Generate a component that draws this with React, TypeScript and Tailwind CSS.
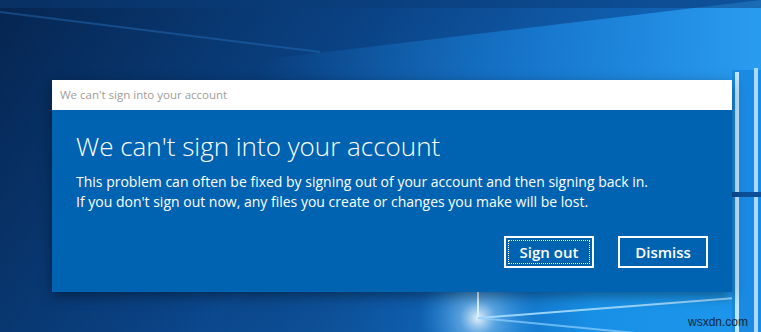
import React from 'react';

function Wallpaper() {
  return (
    <svg className="absolute inset-0" width="761" height="332" viewBox="0 0 761 332">
      <defs>
        <linearGradient id="base" x1="0" y1="0" x2="1" y2="0.3">
          <stop offset="0" stopColor="#062550" />
          <stop offset="0.45" stopColor="#0a4284" />
          <stop offset="1" stopColor="#1572cc" />
        </linearGradient>
        <linearGradient id="topband" x1="0" y1="0" x2="1" y2="0">
          <stop offset="0" stopColor="#1a7fd6" stopOpacity="0" />
          <stop offset="0.5" stopColor="#1a86e0" stopOpacity="0.6" />
          <stop offset="1" stopColor="#2a9cf0" stopOpacity="1" />
        </linearGradient>
        <linearGradient id="floor" x1="0" y1="0" x2="1" y2="0">
          <stop offset="0" stopColor="#05254d" stopOpacity="0" />
          <stop offset="0.4" stopColor="#0d5fb0" stopOpacity="0.5" />
          <stop offset="0.7" stopColor="#1890e6" stopOpacity="1" />
          <stop offset="1" stopColor="#1d97ec" stopOpacity="1" />
        </linearGradient>
        <radialGradient id="glow" cx="478" cy="318" r="60" gradientUnits="userSpaceOnUse">
          <stop offset="0" stopColor="#ffffff" stopOpacity="0.9" />
          <stop offset="0.3" stopColor="#9fd8ff" stopOpacity="0.5" />
          <stop offset="1" stopColor="#3aa8f5" stopOpacity="0" />
        </radialGradient>
      </defs>
      <rect width="761" height="332" fill="url(#base)" />
      <polygon points="260,60 761,0 761,90 260,90" fill="url(#topband)" />
      <polygon points="0,0 761,0 761,8 0,8" fill="#0a3c78" opacity="0.5" />
      <line x1="0" y1="12" x2="320" y2="52" stroke="#2a78c8" strokeWidth="2" opacity="0.4" />
      <polygon points="250,292 761,292 761,332 200,332" fill="url(#floor)" />
      <circle cx="478" cy="318" r="60" fill="url(#glow)" />
      <line x1="478" y1="292" x2="478" y2="318" stroke="#d8f0ff" strokeWidth="2" />
      <line x1="478" y1="318" x2="761" y2="296" stroke="#a8dcff" strokeWidth="2" opacity="0.9" />
      <line x1="478" y1="318" x2="761" y2="345" stroke="#8fd0ff" strokeWidth="2" opacity="0.7" />
      <rect x="732" y="70" width="29" height="262" fill="#1a8ae2" />
      <rect x="735" y="72" width="4" height="260" fill="#bfe6ff" />
      <rect x="754" y="68" width="4" height="264" fill="#a8dcff" />
      <rect x="732" y="192" width="29" height="5" fill="#0c4f98" />
    </svg>
  );
}

export default function App() {
  return (
    <div className="relative w-[761px] h-[332px] overflow-hidden" style={{ fontFamily: '"Open Sans", "Noto Sans", sans-serif' }}>
      <Wallpaper />
      <div className="relative ml-[52px] mt-[80px] w-[680px] shadow-[0_4px_12px_rgba(0,0,0,0.4)]">
        <div className="h-[30px] bg-white flex items-center pl-2 text-[11.5px] text-[#a09c98]">
          We can't sign into your account
        </div>
        <div className="h-[182px] bg-[#0063b1] px-6 pt-[19px] text-white">
          <h1 className="text-[26px] font-light leading-[35px]">We can't sign into your account</h1>
          <p className="mt-[8px] text-[14px] leading-[20px]">
            This problem can often be fixed by signing out of your account and then signing back in.
            <br />
            If you don't sign out now, any files you create or changes you make will be lost.
          </p>
          <div className="flex justify-end gap-6 mt-[24px]">
            <button className="w-[90px] h-[32px] border-2 border-white p-[2px] text-[15px] font-semibold">
              <span className="flex h-full w-full items-center justify-center border border-dotted border-white">Sign out</span>
            </button>
            <button className="w-[90px] h-[32px] border-2 border-white text-[15px] font-semibold">Dismiss</button>
          </div>
        </div>
      </div>
      <div className="absolute left-[688px] top-[313px] text-[12px] text-[#10283f]" style={{ fontFamily: '"Liberation Sans", sans-serif' }}>
        wsxdn.com
      </div>
    </div>
  );
}
